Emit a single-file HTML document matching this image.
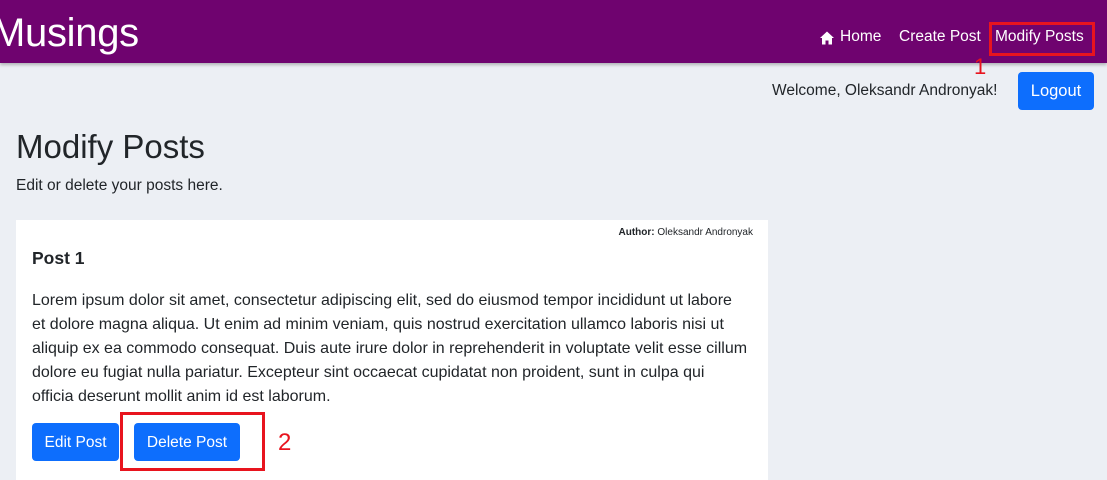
<!DOCTYPE html>
<html><head><meta charset="utf-8"><style>
*{box-sizing:border-box;margin:0;padding:0}
body{width:1107px;height:474px;overflow:hidden;background:#eceff4;font-family:"Liberation Sans",sans-serif;color:#212529;position:relative}
.nav{position:absolute;left:0;top:0;width:1107px;height:63px;background:#6f036f;box-shadow:0 2px 3px rgba(0,0,0,.25)}
.brand{position:absolute;left:-8px;top:11px;font-size:40px;color:#fff;letter-spacing:-0.3px}
.nl{position:absolute;top:28px;font-size:15.5px;color:#fff;white-space:nowrap}
.box{position:absolute;border:3px solid #e8141e}
.red{position:absolute;color:#e8141e;font-size:24px}
.btn{position:absolute;background:#0d6efd;color:#fff;border-radius:4px;font-size:15.5px;text-align:center;white-space:nowrap}
.card{position:absolute;left:16px;top:220px;width:752px;height:260px;background:#fff}
.p{position:absolute;left:32px;top:288px;font-size:16px;line-height:24px;white-space:nowrap;letter-spacing:0px}
</style></head><body>
<div class="nav">
<div class="brand">Musings</div>
<svg style="position:absolute;left:820px;top:31px" width="14" height="14" viewBox="0 0 14 14"><path d="M7 0.5L0 7h2v6.5h3.5v-4h3v4H12V7h2z" fill="#fff"/></svg>
<div class="nl" style="left:840px">Home</div>
<div class="nl" style="left:899px">Create Post</div>
<div class="nl" style="left:995px">Modify Posts</div>
</div>
<div class="box" style="left:989px;top:22px;width:106px;height:34px"></div>
<div class="red" style="left:974px;top:54px;font-size:22px">1</div>
<div style="position:absolute;left:772px;top:82px;font-size:15.5px;white-space:nowrap">Welcome, Oleksandr Andronyak!</div>
<div class="btn" style="left:1018px;top:72px;width:76px;height:38px;line-height:39px;font-size:16.5px">Logout</div>
<div style="position:absolute;left:16px;top:128px;font-size:33px">Modify Posts</div>
<div style="position:absolute;left:16px;top:177px;font-size:15.5px">Edit or delete your posts here.</div>
<div class="card"></div>
<div style="position:absolute;right:354px;top:227px;font-size:10px;white-space:nowrap"><b>Author:</b> Oleksandr Andronyak</div>
<div style="position:absolute;left:32px;top:248px;font-size:17.5px;font-weight:bold">Post 1</div>
<div class="p" style="top:289px">Lorem ipsum dolor sit amet, consectetur adipiscing elit, sed do eiusmod tempor incididunt ut labore<br>et dolore magna aliqua. Ut enim ad minim veniam, quis nostrud exercitation ullamco laboris nisi ut<br>aliquip ex ea commodo consequat. Duis aute irure dolor in reprehenderit in voluptate velit esse cillum<br>dolore eu fugiat nulla pariatur. Excepteur sint occaecat cupidatat non proident, sunt in culpa qui<br>officia deserunt mollit anim id est laborum.</div>
<div class="btn" style="left:32px;top:423px;width:87px;height:38px;line-height:40px">Edit Post</div>
<div class="btn" style="left:134px;top:423px;width:106px;height:38px;line-height:40px">Delete Post</div>
<div class="box" style="left:120px;top:412px;width:145px;height:59px"></div>
<div class="red" style="left:278px;top:429px">2</div>
</body></html>
